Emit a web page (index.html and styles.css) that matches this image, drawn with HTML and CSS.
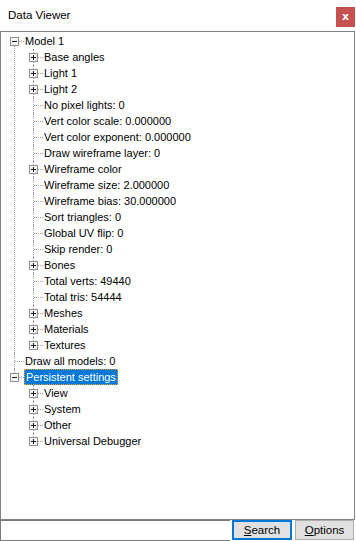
FILE: index.html
```html
<!DOCTYPE html>
<html lang="en">
<head>
  <meta charset="UTF-8">
  <meta name="viewport" content="width=device-width, initial-scale=1.0">
  <title>Data Viewer</title>
  <link rel="stylesheet" href="styles.css">
</head>
<body>
  <svg class="defs" width="0" height="0">
    <symbol id="plus" viewBox="0 0 9 9">
      <rect x="0.5" y="0.5" width="8" height="8" fill="#f4f4f4" stroke="#919191"/>
      <path d="M2 4.5h5M4.5 2v5" stroke="#1e1e1e"/>
    </symbol>
    <symbol id="minus" viewBox="0 0 9 9">
      <rect x="0.5" y="0.5" width="8" height="8" fill="#f4f4f4" stroke="#919191"/>
      <path d="M2 4.5h5" stroke="#1e1e1e"/>
    </symbol>
  </svg>

  <div class="window">
    <header class="titlebar">
      <span class="title">Data Viewer</span>
      <button class="close">x</button>
    </header>

    <div class="treebox">
      <ul class="tree">
        <li class="first">
          <div class="row"><svg class="exp"><use href="#minus"/></svg><span class="label">Model 1</span></div>
          <ul>
            <li><div class="row"><svg class="exp"><use href="#plus"/></svg><span class="label">Base angles</span></div></li>
            <li><div class="row"><svg class="exp"><use href="#plus"/></svg><span class="label">Light 1</span></div></li>
            <li><div class="row"><svg class="exp"><use href="#plus"/></svg><span class="label">Light 2</span></div></li>
            <li><div class="row"><i class="gap"></i><span class="label">No pixel lights: 0</span></div></li>
            <li><div class="row"><i class="gap"></i><span class="label">Vert color scale: 0.000000</span></div></li>
            <li><div class="row"><i class="gap"></i><span class="label">Vert color exponent: 0.000000</span></div></li>
            <li><div class="row"><i class="gap"></i><span class="label">Draw wireframe layer: 0</span></div></li>
            <li><div class="row"><svg class="exp"><use href="#plus"/></svg><span class="label">Wireframe color</span></div></li>
            <li><div class="row"><i class="gap"></i><span class="label">Wireframe size: 2.000000</span></div></li>
            <li><div class="row"><i class="gap"></i><span class="label">Wireframe bias: 30.000000</span></div></li>
            <li><div class="row"><i class="gap"></i><span class="label">Sort triangles: 0</span></div></li>
            <li><div class="row"><i class="gap"></i><span class="label">Global UV flip: 0</span></div></li>
            <li><div class="row"><i class="gap"></i><span class="label">Skip render: 0</span></div></li>
            <li><div class="row"><svg class="exp"><use href="#plus"/></svg><span class="label">Bones</span></div></li>
            <li><div class="row"><i class="gap"></i><span class="label">Total verts: 49440</span></div></li>
            <li><div class="row"><i class="gap"></i><span class="label">Total tris: 54444</span></div></li>
            <li><div class="row"><svg class="exp"><use href="#plus"/></svg><span class="label">Meshes</span></div></li>
            <li><div class="row"><svg class="exp"><use href="#plus"/></svg><span class="label">Materials</span></div></li>
            <li><div class="row"><svg class="exp"><use href="#plus"/></svg><span class="label">Textures</span></div></li>
          </ul>
        </li>
        <li><div class="row"><i class="gap"></i><span class="label">Draw all models: 0</span></div></li>
        <li>
          <div class="row"><svg class="exp"><use href="#minus"/></svg><span class="label selected">Persistent settings</span></div>
          <ul>
            <li><div class="row"><svg class="exp"><use href="#plus"/></svg><span class="label">View</span></div></li>
            <li><div class="row"><svg class="exp"><use href="#plus"/></svg><span class="label">System</span></div></li>
            <li><div class="row"><svg class="exp"><use href="#plus"/></svg><span class="label">Other</span></div></li>
            <li><div class="row"><svg class="exp"><use href="#plus"/></svg><span class="label">Universal Debugger</span></div></li>
          </ul>
        </li>
      </ul>
    </div>

    <div class="bottombar">
      <input class="search-input" type="text">
      <button class="btn default"><u>S</u>earch</button>
      <button class="btn"><u>O</u>ptions</button>
    </div>
  </div>
</body>
</html>
```

FILE: styles.css
```css
body { margin: 0; background: #fff; font-family: "Liberation Sans", Arial, sans-serif; font-size: 11px; color: #000; }
.defs { position: absolute; }

.window { width: 356px; height: 541px; display: flex; flex-direction: column; }

.titlebar {
  height: 31px;
  display: flex;
  align-items: flex-start;
  justify-content: space-between;
  box-sizing: border-box;
}
.title {
  font-size: 11.5px;
  margin: 9px 0 0 8px;
}
.close {
  margin: 7px 1px 0 0;
  width: 19px;
  height: 20px;
  border: none;
  padding: 0;
  background: #c75050;
  color: #fff;
  font: bold 11px "DejaVu Sans", sans-serif;
  line-height: 18px;
}

.treebox {
  height: 489px;
  box-sizing: border-box;
  border: 1px solid #828282;
  margin-right: 1px;
}

.tree, .tree ul { list-style: none; margin: 0; padding: 0; }
.tree { padding: 1px 0 0 4px; }
.tree ul { padding-left: 19px; }
.tree li { position: relative; }

/* dotted connector lines */
.tree li::before {
  content: "";
  position: absolute;
  left: 9px;
  top: 0;
  bottom: 0;
  border-left: 1px dotted #a0a0a0;
}
.tree li.first::before { top: 8px; }
.tree li:last-child::before { bottom: auto; height: 8px; }
.tree li::after {
  content: "";
  position: absolute;
  left: 10px;
  top: 8px;
  width: 9px;
  border-top: 1px dotted #a0a0a0;
}

.row { display: flex; align-items: flex-start; height: 16px; }
.exp {
  position: relative;
  z-index: 1;
  width: 9px;
  height: 9px;
  margin: 4px 5px 0 5px;
  flex: none;
}
.gap { width: 19px; flex: none; }

.label {
  position: relative;
  z-index: 1;
  padding: 0 2px 0 0;
  border: 1px solid transparent;
  line-height: 14px;
  white-space: nowrap;
}
.label.selected {
  padding: 0 1px;
  background: #0078d7;
  color: #fff;
  border: 1px dotted #f0a030;
}

.bottombar { height: 21px; display: flex; align-items: stretch; }
.search-input {
  width: 230px;
  box-sizing: border-box;
  margin: 0;
  border: 1px solid #7a7a7a;
  border-right: none;
  padding: 0 3px;
  font: inherit;
  outline: none;
}
.btn {
  margin: 0 0 1px 2px;
  padding: 0;
  height: 20px;
  box-sizing: border-box;
  background: #e1e1e1;
  border: 1px solid #adadad;
  font: inherit;
  font-size: 11.5px;
  color: #000;
}
.btn.default { width: 60px; border: 2px solid #0078d7; }
.btn + .btn { width: 59px; margin-left: 3px; }
```
